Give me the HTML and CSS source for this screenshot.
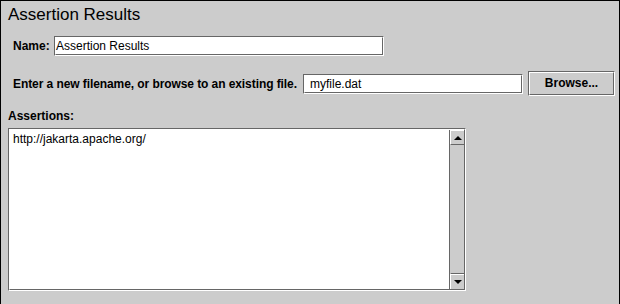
FILE: index.html
```html
<!DOCTYPE html>
<html>
<head>
<meta charset="utf-8">
<link rel="stylesheet" href="styles.css">
</head>
<body>
<div class="panel">
  <div class="title">Assertion Results</div>
  <div class="row name-row">
    <span class="label name-label">Name:</span>
    <div class="field name-field"><div class="field-in">Assertion Results</div></div>
  </div>
  <div class="row file-row">
    <span class="label file-label">Enter a new filename, or browse to an existing file.</span>
    <div class="field file-field"><div class="field-in">myfile.dat</div></div>
    <div class="button"><div class="button-in">Browse...</div></div>
  </div>
  <div class="section">
    <div class="label assert-label">Assertions:</div>
    <div class="scrollpane">
      <div class="scrollpane-in">
        <div class="textarea">http://jakarta.apache.org/</div>
        <div class="scrollbar">
          <div class="sb-btn sb-up"><span class="arrow-up"></span></div>
          <div class="sb-track"></div>
          <div class="sb-btn sb-down"><span class="arrow-down"></span></div>
        </div>
      </div>
    </div>
  </div>
</div>
</body>
</html>
```
FILE: styles.css
```css
html, body {
  margin: 0;
  padding: 0;
  background: #cccccc;
}
.panel {
  width: 618px;
  height: 303px;
  border: 1px solid #000;
  border-bottom: none;
  background: #cccccc;
  font-family: "Liberation Sans", Arial, sans-serif;
  font-size: 12px;
  color: #000;
  display: flex;
  flex-direction: column;
}
.title {
  font-size: 17px;
  line-height: 20px;
  padding: 4px 0 0 7px;
}
.row {
  display: flex;
  align-items: center;
  padding-left: 12px;
}
.label {
  font-weight: bold;
  line-height: 14px;
  white-space: nowrap;
}
.name-row {
  margin-top: 11px;
  height: 20px;
}
.name-label {
  width: 41px;
}
.field {
  box-sizing: border-box;
  height: 20px;
  border: 1px solid;
  border-color: #666666 #ffffff #ffffff #666666;
}
.field-in {
  box-sizing: border-box;
  height: 18px;
  border: 1px solid;
  border-color: #ffffff #666666 #666666 #ffffff;
  background: #fff;
  line-height: 16px;
  white-space: nowrap;
}
.name-field {
  width: 330px;
}
.name-field .field-in {
  padding-left: 0;
}
.file-row {
  margin-top: 15px;
  height: 25px;
}
.file-label {
  width: 290px;
  letter-spacing: -0.08px;
}
.file-field {
  width: 220px;
}
.file-field .field-in {
  padding-left: 5px;
}
.button {
  box-sizing: border-box;
  margin-left: 5px;
  width: 87px;
  height: 25px;
  border: 1px solid;
  border-color: #666666 #ffffff #ffffff #666666;
}
.button-in {
  box-sizing: border-box;
  height: 23px;
  border: 1px solid;
  border-color: #ffffff #666666 #666666 #ffffff;
  font-weight: bold;
  text-align: center;
  line-height: 21px;
}
.section {
  padding-left: 7px;
  margin-top: 13px;
}
.assert-label {
  height: 14px;
}
.scrollpane {
  box-sizing: border-box;
  margin-top: 5px;
  width: 458px;
  height: 163px;
  border: 1px solid;
  border-color: #666666 #ffffff #ffffff #666666;
}
.scrollpane-in {
  box-sizing: border-box;
  height: 161px;
  border: 1px solid;
  border-color: #ffffff #666666 #666666 #ffffff;
  display: flex;
  background: #fff;
}
.textarea {
  flex: 1;
  padding: 2px 0 0 3px;
  line-height: 14px;
  background: #fff;
}
.scrollbar {
  box-sizing: border-box;
  width: 15px;
  border-left: 1px solid #666666;
  background: #cccccc;
  display: flex;
  flex-direction: column;
}
.sb-btn {
  box-sizing: border-box;
  height: 15px;
  background: #cccccc;
  display: flex;
  align-items: center;
  justify-content: center;
}
.sb-up {
  border-top: 1px solid #ffffff;
  border-left: 1px solid #ffffff;
  border-bottom: 1px solid #666666;
}
.sb-down {
  height: 16px;
  border-top: 1px solid #666666;
  border-left: 1px solid #ffffff;
  box-shadow: inset 0 1px 0 #ffffff;
}
.sb-track {
  flex: 1;
  background: #cccccc;
}
.arrow-up {
  width: 0;
  height: 0;
  border-left: 4px solid transparent;
  border-right: 4px solid transparent;
  border-bottom: 4px solid #000;
}
.arrow-down {
  width: 0;
  height: 0;
  border-left: 4px solid transparent;
  border-right: 4px solid transparent;
  border-top: 4px solid #000;
}
```
